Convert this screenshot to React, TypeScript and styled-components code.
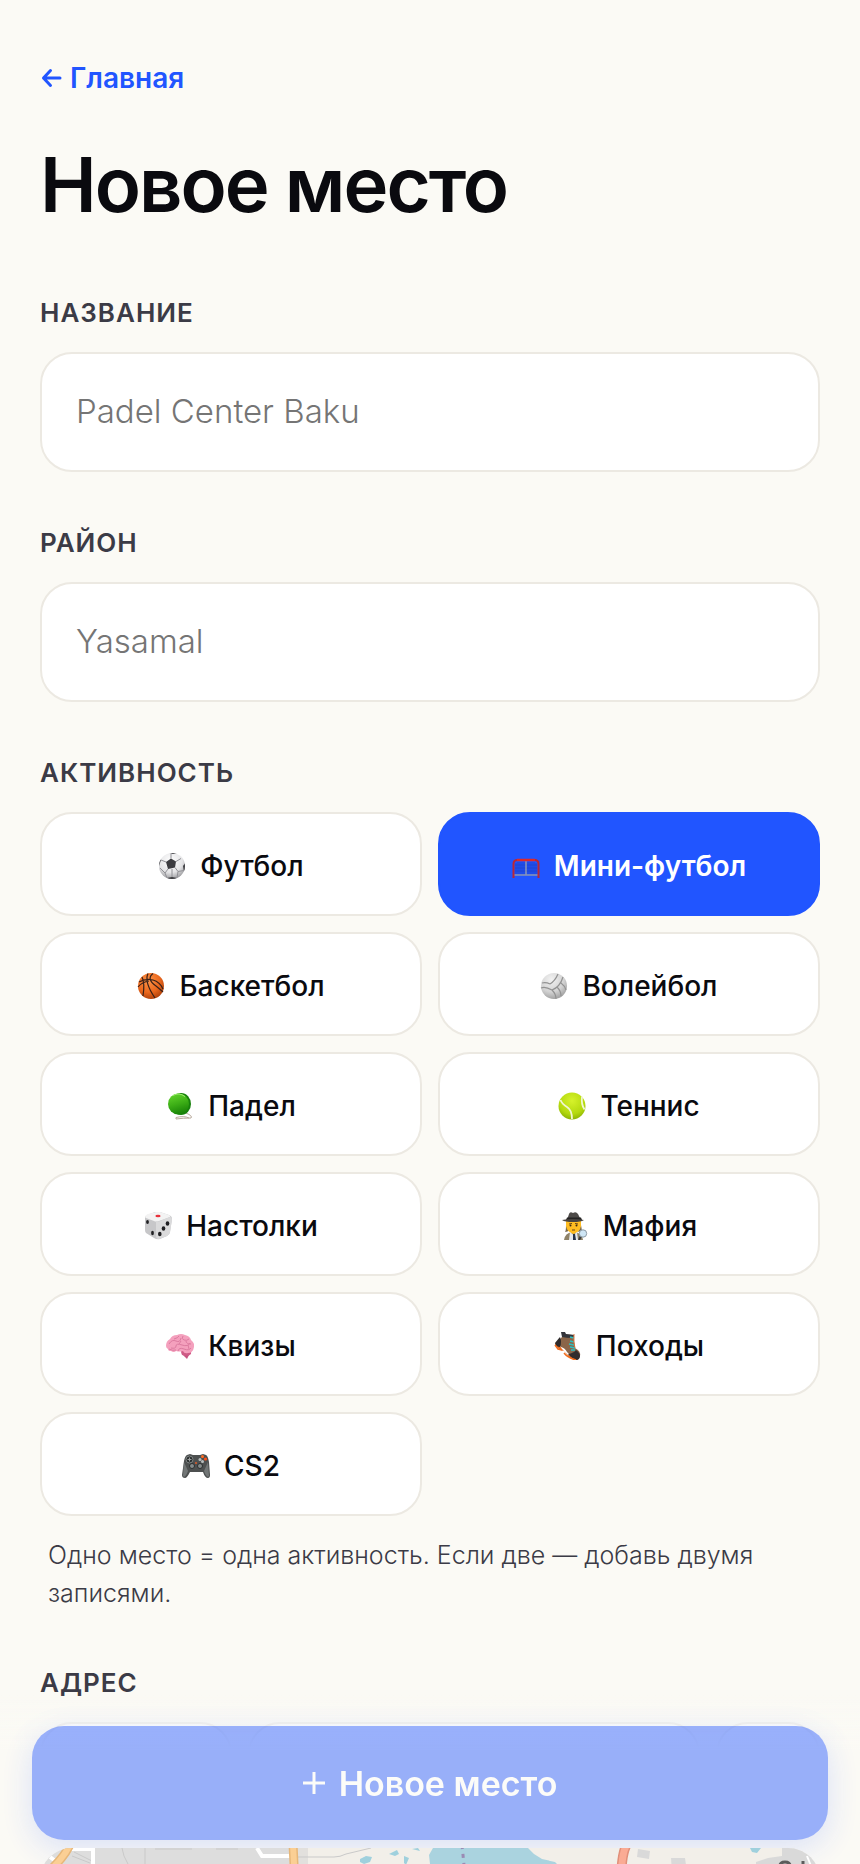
import React, { useState } from "react";
import styled, { createGlobalStyle } from "styled-components";

const mainColor = "#2155ff";
const pageColor = "#fbfaf5";
const inkColor = "#0a0a0f";
const mutedColor = "#3b3b46";
const lineColor = "#ece9e2";

const activities = [
  { id: "football", title: "Футбол", icon: <FootballIcon /> },
  { id: "mini", title: "Мини-футбол", icon: <GoalIcon /> },
  { id: "basketball", title: "Баскетбол", icon: <BasketballIcon /> },
  { id: "volleyball", title: "Волейбол", icon: <VolleyballIcon /> },
  { id: "padel", title: "Падел", icon: <PadelIcon /> },
  { id: "tennis", title: "Теннис", icon: <TennisIcon /> },
  { id: "board", title: "Настолки", icon: <DiceIcon /> },
  { id: "mafia", title: "Мафия", icon: <DetectiveIcon /> },
  { id: "quiz", title: "Квизы", icon: <BrainIcon /> },
  { id: "hiking", title: "Походы", icon: <BootIcon /> },
  { id: "cs2", title: "CS2", icon: <GamepadIcon /> },
];

export default function App() {
  const [name, setName] = useState("");
  const [district, setDistrict] = useState("");
  const [activity, setActivity] = useState("mini");

  return (
    <>
      <GlobalStyle />
      <Page>
        <BackLink href="#">
          <ArrowIcon />
          Главная
        </BackLink>
        <Title>Новое место</Title>
        <Form id="place-form" onSubmit={(e) => e.preventDefault()}>
          <Section>
            <Label htmlFor="name">Название</Label>
            <TextInput
              id="name"
              placeholder="Padel Center Baku"
              value={name}
              onChange={(e) => setName(e.target.value)}
            />
          </Section>
          <Section>
            <Label htmlFor="district">Район</Label>
            <TextInput
              id="district"
              placeholder="Yasamal"
              value={district}
              onChange={(e) => setDistrict(e.target.value)}
            />
          </Section>
          <Section>
            <Label as="h2" id="activity">Активность</Label>
            <ActivityGrid role="group" aria-labelledby="activity">
              {activities.map(({ id, title, icon }) => (
                <ActivityButton
                  key={id}
                  type="button"
                  $active={id === activity}
                  aria-pressed={id === activity}
                  onClick={() => setActivity(id)}
                >
                  {icon}
                  {title}
                </ActivityButton>
              ))}
            </ActivityGrid>
            <Hint>Одно место = одна активность. Если две — добавь двумя записями.</Hint>
          </Section>
          <Section>
            <Label as="h2">Адрес</Label>
            <AddressRow>
              <AddressBox />
              <AddressBox />
              <AddressBox />
            </AddressRow>
            <MapArea>
              <MapDrawing />
            </MapArea>
          </Section>
        </Form>
      </Page>
      <BottomBar>
        <SubmitButton type="submit" form="place-form" disabled>
          <PlusIcon />
          Новое место
        </SubmitButton>
      </BottomBar>
    </>
  );
};

function ArrowIcon() {
  return (
    <svg width="24" height="20" viewBox="0 0 24 20" fill="none" stroke="currentColor" strokeWidth="3" strokeLinecap="round" strokeLinejoin="round" aria-hidden="true">
      <path d="M20 10H3.500M10.500 2.500L3.500 10l7 7.500" />
    </svg>
  );
}

function PlusIcon() {
  return (
    <svg width="22" height="22" viewBox="0 0 22 22" stroke="currentColor" strokeWidth="3" aria-hidden="true">
      <path d="M11 0v22M0 11h22" />
    </svg>
  );
}

function FootballIcon() {
  return (
    <Emoji viewBox="0 0 28 28" aria-hidden="true">
      <defs>
        <radialGradient id="football" cx=".45" cy=".3" r=".75">
          <stop offset="0" stopColor="#fff" />
          <stop offset=".6" stopColor="#e4e4e6" />
          <stop offset="1" stopColor="#8f8f92" />
        </radialGradient>
        <clipPath id="football-clip"><circle cx="14" cy="14" r="13" /></clipPath>
      </defs>
      <circle cx="14" cy="14" r="13" fill="url(#football)" />
      <g clipPath="url(#football-clip)">
        <path d="M8 10l5-3.500 5 3-1 6-7 1.500zM8 0l7 2 6-1-1-2H8zM0 6l3 2-2 6H-1zM28 10l-3 4 1 6 3-2zM9 26l5-1 5 1v3H9zM21 1l4 5 3 1V0z" fill="#3c3c40" />
        <path d="M13 6.500V2M18 9.500l5-3M17 15.500l3 4M10 17l-3 4M8 10L3 8M20 19.500l6-1M20 19.500L19 26M7 21l2 5M7 21l-5-5M14 25v-8" stroke="#909095" fill="none" />
      </g>
    </Emoji>
  );
}

function GoalIcon() {
  return (
    <Emoji viewBox="0 0 28 28" aria-hidden="true">
      <path d="M4 11v11M6 10v12M8 10v12M10 10v12M12 10v12M16 10v12M18 10v12M20 10v12M22 10v12M24 11v11M3 13h22M3 16h22M3 19h22" stroke="#1c45d4" strokeWidth="1" />
      <path d="M14 9v14M2 23h24" stroke="#8994b3" strokeWidth="1.500" />
      <path d="M1.500 26V12q0-4 4-4h17q4 0 4 4v14" fill="none" stroke="#b82738" strokeWidth="2" />
      <path d="M5 8h18" stroke="#dc2a2c" strokeWidth="2.500" />
    </Emoji>
  );
}

function BasketballIcon() {
  return (
    <Emoji viewBox="0 0 28 28" aria-hidden="true">
      <defs>
        <radialGradient id="basketball" cx=".4" cy=".3" r=".75">
          <stop offset="0" stopColor="#ff9447" />
          <stop offset=".6" stopColor="#ea671d" />
          <stop offset="1" stopColor="#ab3d08" />
        </radialGradient>
      </defs>
      <circle cx="14" cy="14" r="13" fill="url(#basketball)" />
      <path d="M2 10Q9 6 16 8t10 9M11 1.500Q7 10 18 26M16 1.500Q9 7 19 14q6 5 7 6M5 5q3 6 1 19M1 15q4-5 11-6" fill="none" stroke="#3a2119" strokeWidth="1.200" />
    </Emoji>
  );
}

function VolleyballIcon() {
  return (
    <Emoji viewBox="0 0 28 28" aria-hidden="true">
      <defs>
        <radialGradient id="volleyball" cx=".4" cy=".25" r=".8">
          <stop offset="0" stopColor="#f2f2f2" />
          <stop offset=".6" stopColor="#d2d2d2" />
          <stop offset="1" stopColor="#9b9b9b" />
        </radialGradient>
      </defs>
      <circle cx="14" cy="14" r="13" fill="url(#volleyball)" />
      <path d="M12 18Q20 15 23 5M12 18Q5 14 1 16M12 18q4 4 4 9M10 12Q15 9 18 2M10 12Q6 10 2 11M17 15q4 4 4 9M21 11q4 3 5 7" fill="none" stroke="#929292" strokeWidth="1.200" />
    </Emoji>
  );
}

function PadelIcon() {
  return (
    <Emoji viewBox="0 0 28 28" aria-hidden="true">
      <defs>
        <linearGradient id="padel" x1=".3" y1="0" x2=".6" y2="1">
          <stop offset="0" stopColor="#62d32c" />
          <stop offset=".5" stopColor="#3cae16" />
          <stop offset="1" stopColor="#168006" />
        </linearGradient>
      </defs>
      <path d="M20 21q7 3 5 5-8 0-15 1v-1.500q8-2 13 .5" fill="none" stroke="#b9aa9c" strokeWidth="1" />
      <ellipse cx="15" cy="12" rx="10" ry="11" fill="#17810a" />
      <circle cx="12.500" cy="12" r="10.500" fill="url(#padel)" />
      <path d="M7 3.500q6-3.500 12 1" stroke="#a0ec73" strokeWidth="1" fill="none" />
    </Emoji>
  );
}

function TennisIcon() {
  return (
    <Emoji viewBox="0 0 28 28" aria-hidden="true">
      <defs>
        <radialGradient id="tennis" cx=".5" cy=".3" r=".7">
          <stop offset="0" stopColor="#d6f22b" />
          <stop offset=".7" stopColor="#b4d90f" />
          <stop offset="1" stopColor="#8db404" />
        </radialGradient>
      </defs>
      <circle cx="14" cy="14" r="13.500" fill="url(#tennis)" />
      <path d="M2.500 8Q4 12 9 15t5 12M24 4.500q-1 8 2.500 13" fill="none" stroke="#f1f5d5" strokeWidth="1.800" />
    </Emoji>
  );
}

function DiceIcon() {
  return (
    <Emoji viewBox="0 0 28 28" aria-hidden="true">
      <path d="M1 6q0-2 2-3l8-3q2-.5 5 0l9 3q3 1 3 4l-2 13q0 2-3 4l-7 3q-3 1-6-1l-8-5Q1 20 1 18z" fill="#c7c7c9" />
      <path d="M1 5q0-2 3-3l8-2q2-.5 4 0l9 3q2 1 1 2l-11 4q-3 1-5 0L2 6z" fill="#f3f3f3" />
      <path d="M12 9q2 1 4 0l10-4q2 0 2 3l-2 12q0 2-3 4l-8 3q-3 0-3-3z" fill="#dadadb" />
      <ellipse cx="14" cy="4" rx="2.600" ry="1.200" fill="#e8323c" />
      <g fill="#202023">
        <ellipse cx="3.500" cy="10" rx="1.400" ry="2" />
        <ellipse cx="8.500" cy="21" rx="1.400" ry="2.200" />
        <ellipse cx="23.500" cy="11.500" rx="1.800" ry="2.200" />
        <ellipse cx="19.500" cy="16.500" rx="1.800" ry="2.200" />
        <ellipse cx="15.800" cy="22" rx="1.800" ry="2.200" />
      </g>
    </Emoji>
  );
}

function DetectiveIcon() {
  return (
    <Emoji viewBox="0 0 28 28" aria-hidden="true">
      <path d="M3 28q1-7 8-8h3q7 1 8 8z" fill="#8e8268" />
      <path d="M5 13q0 6-1 7 3 0 4-2zM20 13l1 6-4 1z" fill="#756752" />
      <path d="M5 8h15v6q-1 6-7.500 8Q6 20 5 14z" fill="#ffbd22" />
      <path d="M9 20l3.500 3 3.500-3 1 8H8z" fill="#e7eaf0" />
      <path d="M12 22h2l1 6h-3z" fill="#27334a" />
      <path d="M6 8l2-6q1-3 4-1 3-2 5 1l3 6z" fill="#4d4a48" />
      <path d="M6 5.500h14l1 2.500H5z" fill="#242323" />
      <path d="M1 8q5-1 11-1t11 1q-3 2-11 2T1 8z" fill="#494542" />
      <path d="M8 12l3-.5M14 11.500l3 .5M11 18h3" stroke="#694512" />
      <circle cx="9.500" cy="13.500" r="1" fill="#3d2914" />
      <circle cx="15.500" cy="13.500" r="1" fill="#3d2914" />
      <path d="M20 24l-2 4" stroke="#39393c" strokeWidth="2" />
      <circle cx="22" cy="21.500" r="3.700" fill="#cfe6f5" stroke="#8d9aa4" />
    </Emoji>
  );
}

function BrainIcon() {
  return (
    <Emoji viewBox="0 0 28 28" aria-hidden="true">
      <path d="M15 19q1-3 6-3t4 6q-3 3-7 2-3-1-3-5z" fill="#cf5b86" />
      <path d="M0 14q0-5 4-7 2-4 7-4 4-2 8 0 5 1 6 5 4 3 3 7-1 6-6 6-4 1-5-2-3 1-7 0-2 2-5 0-3 0-3-2-2-1-2-3z" fill="#f4a0bd" />
      <path d="M3 12q3-5 7-3t5-3M5 16q5 1 5-2t6-1 8-2M8 7q4-1 5-3M17 4q-2 3 1 4t5-1M20 9q0 3 5 3M12 19q1-4 6-2t7-1M3 17q4 2 7 1M15 9l-2 3M22 13l1 4" fill="none" stroke="#dc7ba0" strokeWidth="1" />
      <path d="M18 24l3 3 2-4z" fill="#c65480" />
    </Emoji>
  );
}

function BootIcon() {
  return (
    <Emoji viewBox="0 0 28 28" aria-hidden="true">
      <path d="M1 12l2-2 5 7 6 6 11 3-2 2q-5 0-9-4l-4-5q-5 0-9-7z" fill="#e86a1e" />
      <path d="M8 2l12 1q0 8 1 13 6 3 5 8-8 2-13-4-2-4-6-5-3-2-4-5l5-5z" fill="#8a6549" />
      <path d="M7 0h4l1 2 8 1-1 3Q12 6 8 5z" fill="#34353b" />
      <path d="M1 11q4-5 5-6 2 5 0 10-4 0-5-4z" fill="#2e2b2b" />
      <path d="M14 22q6-1 8-4 4 3 4 6 0 3-3 4-5-1-9-6z" fill="#312d2d" />
      <path d="M1 13l3 4 4 1M10 21q4 5 12 7" stroke="#ee6c1e" strokeWidth="1.500" fill="none" />
      <path d="M16 5l4 1M16 9l4 1M15 12l5 1M16 15l5 1M17 18l4 0" stroke="#2bc0c2" strokeWidth="1.600" />
      <path d="M20 2q-1 8 1 14" stroke="#d67338" fill="none" />
    </Emoji>
  );
}

function GamepadIcon() {
  return (
    <Emoji viewBox="0 0 28 28" aria-hidden="true">
      <path d="M5 3l3-1 3 1h7l3-1 3 1q2 1 3 7l1 13q0 3-2 3-3 0-5-6H8q-3 6-5 6-3 0-3-3L2 9q1-5 3-6z" fill="#4d5050" />
      <path d="M2 10L1 24q2 3 5-5zM26 10l1 14q-2 3-5-5z" fill="#727676" />
      <circle cx="7.500" cy="7.500" r="3.500" fill="#252929" stroke="#808585" />
      <path d="M7.500 5.500v4M5.500 7.500h4" stroke="#9c9f9f" strokeWidth="1.200" />
      <circle cx="20.500" cy="4.500" r="1.500" fill="#ff6b20" />
      <circle cx="23.500" cy="7" r="1.600" fill="#ff4f18" />
      <circle cx="18" cy="7.500" r="1.500" fill="#b8bebe" />
      <circle cx="20.500" cy="9.500" r="1.500" fill="#b8bebe" />
      <circle cx="14" cy="11" r="1" fill="#e15b29" />
      <circle cx="10" cy="14" r="2.500" fill="#858b8b" stroke="#2a2e2e" />
      <circle cx="18" cy="14" r="2.500" fill="#858b8b" stroke="#2a2e2e" />
    </Emoji>
  );
}

function MapDrawing() {
  return (
    <MapSvg viewBox="0 0 780 320" preserveAspectRatio="xMidYMin slice" aria-hidden="true">
      <rect width="780" height="320" fill="#f2efe9" />
      <path d="M0 0h258v320H0z" fill="#dddddd" />
      <path d="M258 0h10v320h-10z" fill="#e2e0dd" />
      <path d="M82 0q1 8 6 16l40 140M105 0v60M115 1h37M176 1h22M34 4l18 9M32 8l18 7M258 9h36q6 0 12-3l25-6" fill="none" stroke="#c9c9c9" />
      <path d="M53 0v320M28 1h24M10 9l8 6M217 0l5 8h28" fill="none" stroke="#fff" strokeWidth="4" />
      <path d="M31-6Q26 8 8 24M253-4l3 60" fill="none" stroke="#e7b779" strokeWidth="9" />
      <path d="M31-6Q26 8 8 24M253-4l3 60" fill="none" stroke="#fbcf94" strokeWidth="6" />
      <path d="M393 0h95l6 6 8 5 13 3 20 20v127H430l-20-130-20-15-1-9z" fill="#aad3df" />
      <path d="M320 11l6-3 6 1-2 5-6 2-4-2zM349 6l8-4 2 4-4 2zM364 8l5 2-3 7-2-2zM372 1l6-1 2 3zM710 0h11l-4 5-5-1z" fill="#9fd0dd" />
      <path d="M422-3l6 60" stroke="#9a8bb4" strokeWidth="3" strokeDasharray="4 5" />
      <path d="M586-2q-5 10-5 40" fill="none" stroke="#e08f79" strokeWidth="10" />
      <path d="M586-2q-5 10-5 40" fill="none" stroke="#faab94" strokeWidth="7" />
      <path d="M598 1l12 2-1 8-12-2zM631 10h14l2 14h-15zM742 0h38v30h-64v-16l12-4 14-2z" fill="#d9d9d9" />
      <path d="M740 18q0-4 5-4t5 4M763 19v-6" stroke="#5c5c5c" strokeWidth="3" fill="none" />
      <path d="M767 8l4 10" stroke="#fff" strokeWidth="2" />
    </MapSvg>
  );
}

const GlobalStyle = createGlobalStyle`
  * {
    box-sizing: border-box;
  }
  body {
    margin: 0;
    background: ${pageColor};
    color: ${inkColor};
    font-family: Inter, "Liberation Sans", sans-serif;
  }
  button, input {
    font-family: inherit;
  }
`;
const Page = styled.main`
  height: 100vh;
  padding: 56px 40px 0;
  overflow-y: auto;
  scrollbar-width: none;
`;
const BackLink = styled.a`
  display: inline-flex;
  align-items: center;
  gap: 6px;
  color: ${mainColor};
  font-size: 28px;
  font-weight: 600;
  line-height: 44px;
  text-decoration: none;
  vertical-align: top;
`;
const Title = styled.h1`
  margin: 42px 0 66px;
  font-size: 76px;
  font-weight: 600;
  line-height: 84px;
  letter-spacing: -2px;
`;
const Form = styled.form`
  display: flex;
  flex-direction: column;
  gap: 50px;
`;
const Section = styled.section`
  display: flex;
  flex-direction: column;
`;
const Label = styled.label`
  margin: 0 0 18px;
  color: ${mutedColor};
  font-size: 26px;
  font-weight: 600;
  line-height: 42px;
  letter-spacing: 1px;
  text-transform: uppercase;
`;
const TextInput = styled.input`
  width: 100%;
  height: 120px;
  padding: 0 34px 2px;
  border: solid 2px ${lineColor};
  border-radius: 32px;
  background: #fff;
  color: ${inkColor};
  font-size: 33px;
  font-weight: 300;
  outline: none;

  &::placeholder {
    color: #757575;
    opacity: 1;
  }
  &:focus {
    border-color: ${mainColor};
  }
`;
const ActivityGrid = styled.div`
  display: grid;
  grid-template-columns: 1fr 1fr;
  gap: 16px;
`;
const ActivityButton = styled.button<{ $active: boolean }>`
  display: flex;
  align-items: center;
  justify-content: center;
  gap: 14px;
  height: 104px;
  padding: 4px 24px 0;
  border: solid 2px ${({ $active }) => ($active ? mainColor : lineColor)};
  border-radius: 32px;
  background: ${({ $active }) => ($active ? mainColor : "#fff")};
  color: ${({ $active }) => ($active ? "#fff" : inkColor)};
  font-size: 28px;
  font-weight: ${({ $active }) => ($active ? 600 : 500)};
  cursor: pointer;
`;
const Emoji = styled.svg`
  flex: none;
  width: 28px;
  height: 28px;
`;
const Hint = styled.p`
  margin: 20px 8px 0;
  color: ${mutedColor};
  font-size: 25px;
  font-weight: 300;
  line-height: 38px;
`;
const AddressRow = styled.div`
  display: grid;
  grid-template-columns: 192px 1fr 104px;
  gap: 16px;
  margin-bottom: 16px;
`;
const AddressBox = styled.div`
  height: 110px;
  border: solid 2px ${lineColor};
  border-radius: 32px;
  background: #fff;
`;
const MapArea = styled.div`
  position: relative;
  z-index: 2;
  height: 320px;
  border-radius: 32px;
  overflow: hidden;
`;
const MapSvg = styled.svg`
  display: block;
  width: 100%;
  height: 100%;
`;
const BottomBar = styled.div`
  position: fixed;
  right: 0;
  bottom: 0;
  left: 0;
  z-index: 1;
  padding: 32px 32px 24px;
  background: linear-gradient(to bottom, rgba(251, 250, 245, 0), ${pageColor} 56px);
`;
const SubmitButton = styled.button`
  display: flex;
  align-items: center;
  justify-content: center;
  gap: 14px;
  width: 100%;
  height: 114px;
  border: none;
  border-radius: 32px;
  background: ${mainColor};
  box-shadow: 0 8px 32px rgba(33, 85, 255, 0.35);
  color: #fff;
  font-size: 34px;
  font-weight: 600;
  opacity: 0.45;
`;
